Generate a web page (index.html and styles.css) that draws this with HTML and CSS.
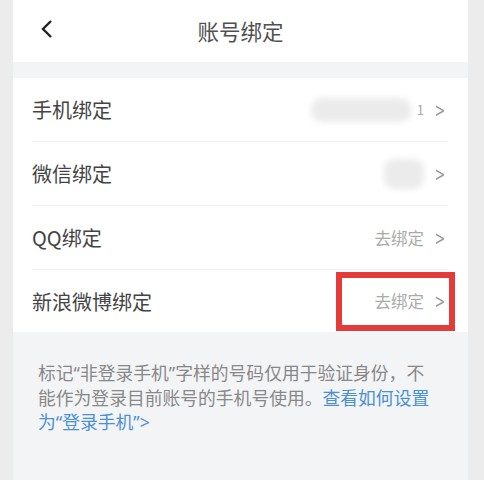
FILE: index.html
```html
<!DOCTYPE html>
<html lang="zh-CN">
<head>
  <meta charset="UTF-8" />
  <meta name="viewport" content="width=device-width, initial-scale=1.0"/>
  <title>账号绑定</title>
  <link rel="stylesheet" href="styles.css">
</head>
<body>
  <div class="page">
    <div class="topbar">
      <span class="back">
        <svg width="12" height="20" viewBox="0 0 12 20"><path d="M10 2 L2 10 L10 18" fill="none" stroke="#222" stroke-width="2.4"/></svg>
      </span>
      <h1>账号绑定</h1>
    </div>

    <div class="card">
      <div class="row">
        <span class="label">手机绑定</span>
        <span class="value">
          <span class="blur blur-phone"></span>
          <span class="digit">1</span>
          <span class="arrow">&gt;</span>
        </span>
      </div>
      <div class="row">
        <span class="label">微信绑定</span>
        <span class="value">
          <span class="blur blur-wx"></span>
          <span class="arrow">&gt;</span>
        </span>
      </div>
      <div class="row">
        <span class="label">QQ绑定</span>
        <span class="value">去绑定 <span class="arrow">&gt;</span></span>
      </div>
      <div class="row">
        <span class="label">新浪微博绑定</span>
        <span class="value">去绑定 <span class="arrow">&gt;</span></span>
        <span class="mark"></span>
      </div>
    </div>

    <p class="note">标记“非登录手机”字样的号码仅用于验证身份，不<br>能作为登录目前账号的手机号使用。<a href="#">查看如何设置<br>为“登录手机”&gt;</a></p>
  </div>
</body>
</html>
```

FILE: styles.css
```css
body {
  margin: 0;
  background: #ececec;
  font-family: "Noto Sans CJK SC", "Noto Sans", sans-serif;
  width: 484px;
  height: 480px;
  overflow: hidden;
}

.page {
  margin-left: 13px;
  width: 455px;
  height: 480px;
  background: #f3f4f6;
}

.topbar {
  height: 62px;
  background: white;
  display: flex;
  align-items: center;
  justify-content: center;
  position: relative;
  margin-bottom: 16px;
}

.back {
  position: absolute;
  left: 28px;
  top: 19px;
}

.topbar h1 {
  margin: 0;
  font-size: 21.5px;
  font-weight: normal;
  color: #505050;
  margin-top: -2px;
}

.card {
  background: white;
  padding: 0 20px 0 19px;
}

.row {
  height: 63px;
  display: flex;
  align-items: center;
  justify-content: space-between;
  border-bottom: 1px solid #efefef;
  position: relative;
}

.row:last-child {
  border-bottom: none;
  height: 62px;
}

.label {
  font-size: 20px;
  color: #444;
}

.value {
  display: flex;
  align-items: center;
  font-size: 16.5px;
  color: #aaa;
  position: relative;
}

.arrow {
  font-family: "DejaVu Sans", sans-serif;
  font-size: 19px;
  color: #999;
  margin-left: 8px;
  transform: scaleX(0.65);
}

.digit {
  font-size: 13px;
  color: #aaa;
}

.blur {
  background: #ebebeb;
  filter: blur(3px);
  border-radius: 10px;
}

.blur-phone {
  width: 100px;
  height: 24px;
  margin-right: 6px;
}

.blur-wx {
  width: 40px;
  height: 30px;
}

.mark {
  position: absolute;
  left: 304px;
  top: 2px;
  width: 107px;
  height: 47px;
  border: 6px solid #e53a3a;
}

.note {
  margin: 29px 0 0 25px;
  font-family: "Noto Sans", "Noto Sans CJK SC", sans-serif;
  font-size: 17.8px;
  line-height: 24.5px;
  color: #888;
}

.note a {
  color: #4b8fd6;
  text-decoration: none;
}
```
